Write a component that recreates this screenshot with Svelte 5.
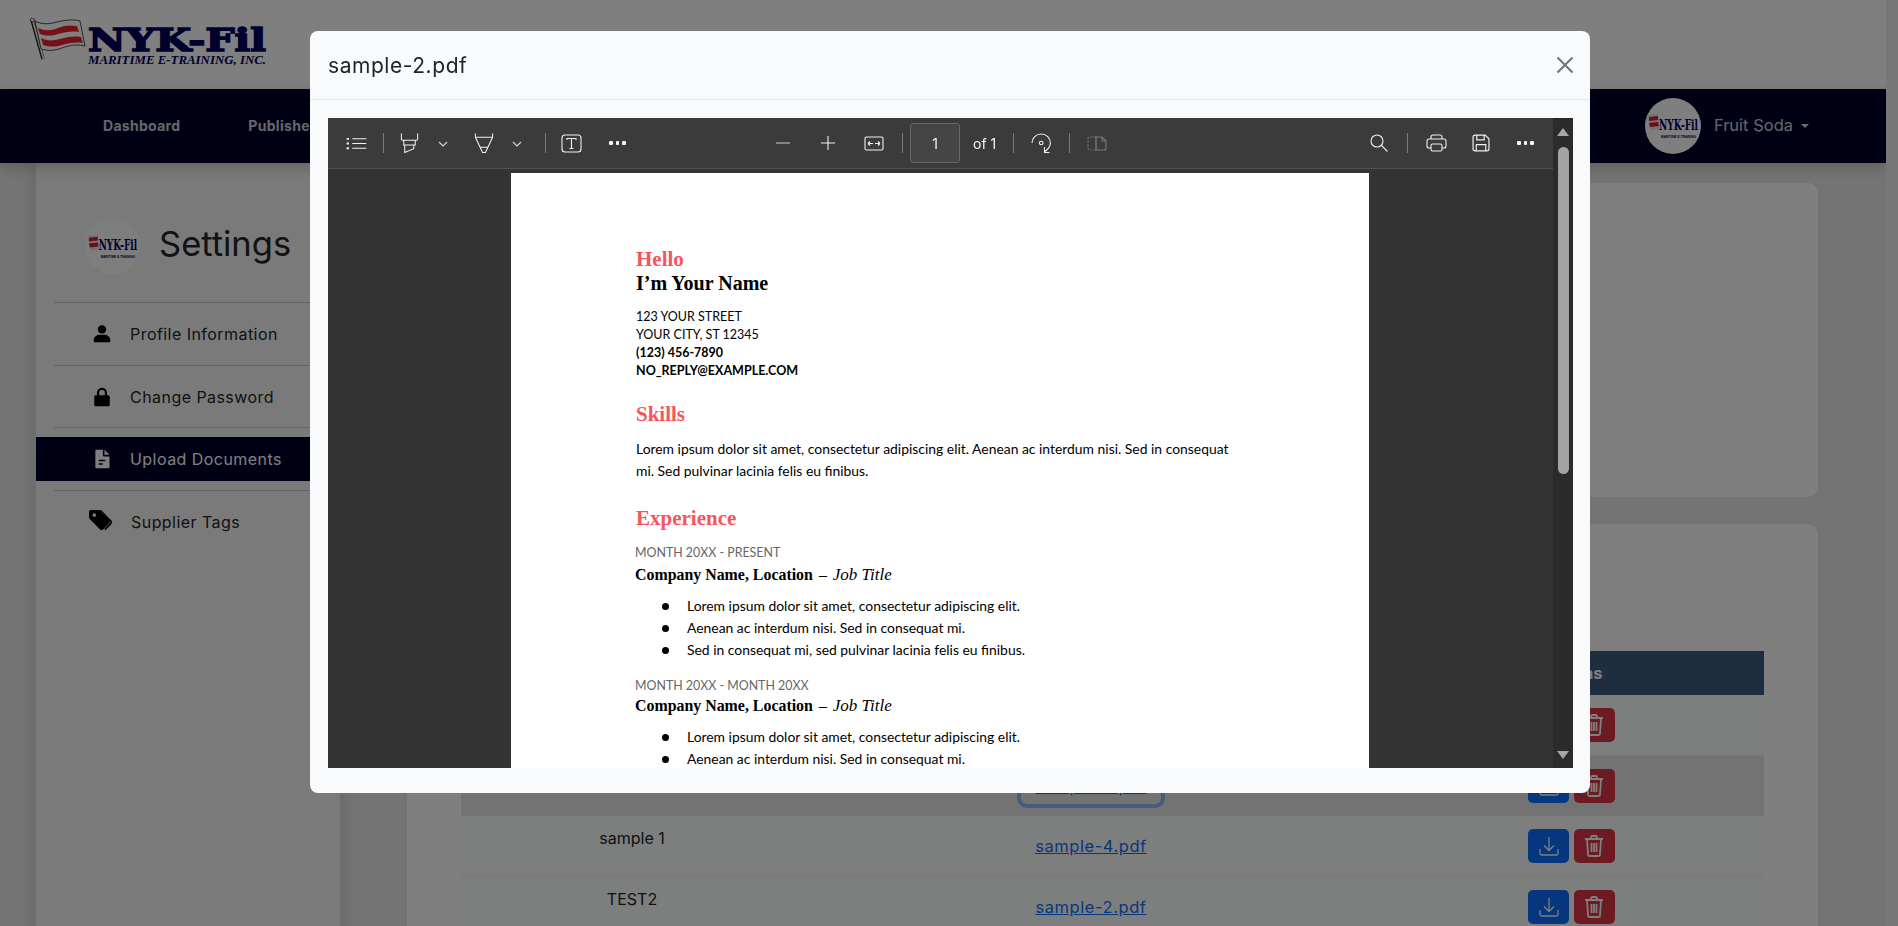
<script>
  const menu = [
    { label: 'Profile Information', icon: 'user' },
    { label: 'Change Password', icon: 'lock' },
    { label: 'Upload Documents', icon: 'file', active: true },
    { label: 'Supplier Tags', icon: 'tags' }
  ];
  const rows = [
    { name: '', file: 'sample-1.pdf' },
    { name: '', file: 'sample-3.pdf', striped: true, focused: true },
    { name: 'sample 1', file: 'sample-4.pdf' },
    { name: 'TEST2', file: 'sample-2.pdf' }
  ];
  const bullets = [
    'Lorem ipsum dolor sit amet, consectetur adipiscing elit.',
    'Aenean ac interdum nisi. Sed in consequat mi.',
    'Sed in consequat mi, sed pulvinar lacinia felis eu finibus.'
  ];
</script>

{#snippet miniLogo()}
  <svg class="mini" viewBox="0 0 56 56" aria-hidden="true">
    <path d="M3 17l10-1 1 15-9 1z" fill="#e4e4e4" />
    <path d="M4 19l9-1v4l-9 1zM4 25l9-1 1 4-9 1z" fill="#d0202c" />
    <text x="14" y="32" class="mini-name" textLength="39" lengthAdjust="spacingAndGlyphs">NYK-Fil</text>
    <text x="16" y="40" class="mini-sub" textLength="35" lengthAdjust="spacingAndGlyphs">MARITIME E-TRAINING</text>
  </svg>
{/snippet}

<div class="page">
  <header class="topbar">
    <svg class="logo" viewBox="0 0 240 50" aria-hidden="true">
      <path d="M2 2l11 39" stroke="#222" stroke-width="3.4" fill="none" />
      <path d="M2.600 2.400l11 39" stroke="#fff" stroke-width="1.600" fill="none" />
      <circle cx="2.400" cy="2" r="2" fill="#fff" stroke="#222" stroke-width=".8" />
      <path d="M5 3c8 4 14 3 22 1s17-3 23-1l5 25c-8-2-15-1-23 2s-14 3-21 1z" fill="#fff" stroke="#222" stroke-width=".8" />
      <path d="M8 10c7 3 13 3 20 0s13-3 19-2l2 6c-7-1-14 0-21 2s-12 2-18 0z" fill="#e8202c" />
      <path d="M11 20c6 3 12 3 19 1s14-3 21-2l2 6c-7-1-14 0-21 2s-13 2-19 0z" fill="#e8202c" />
      <text x="58" y="33" class="logo-name" textLength="178" lengthAdjust="spacingAndGlyphs">NYK-Fil</text>
      <text x="58" y="46" class="logo-sub" textLength="178" lengthAdjust="spacingAndGlyphs">MARITIME E-TRAINING, INC.</text>
    </svg>
  </header>

  <nav class="navbar">
    <div class="nav-links">
      <span>Dashboard</span>
      <span>Published</span>
    </div>
    <div class="nav-user">
      <span class="nav-avatar">{@render miniLogo()}</span>
      <span class="nav-name">Fruit Soda</span>
      <span class="caret"></span>
    </div>
  </nav>

  <div class="content">
    <aside class="sidebar">
      <div class="side-head">
        <span class="side-avatar">{@render miniLogo()}</span>
        <h1>Settings</h1>
      </div>
      <ul class="side-menu">
        {#each menu as item}
          <li class:active={item.active}>
            <span class="side-row">
              <svg class="side-icon" class:wide={item.icon === 'tags'} viewBox="0 0 24 24" aria-hidden="true">
                {#if item.icon === 'user'}
                  <circle cx="12" cy="6.500" r="5" />
                  <path d="M3.500 22c-1.200 0-1.500-.8-1.500-1.800C2 16 5 13 9 13h6c4 0 7 3 7 7.200 0 1-.3 1.800-1.500 1.800z" />
                {:else if item.icon === 'lock'}
                  <path d="M6 10V7a6 6 0 0 1 12 0v3h1.500a1.800 1.800 0 0 1 1.800 1.800v9.400a1.800 1.800 0 0 1-1.800 1.800h-15a1.800 1.800 0 0 1-1.800-1.800v-9.400A1.800 1.800 0 0 1 4.500 10zm2.600 0h6.800V7a3.400 3.400 0 0 0-6.800 0z" fill-rule="evenodd" />
                {:else if item.icon === 'file'}
                  <path d="M5 1h8v6.500a1.500 1.500 0 0 0 1.500 1.500H21v12.500a1.500 1.500 0 0 1-1.500 1.500h-14A1.500 1.500 0 0 1 4 21.500v-19A1.500 1.500 0 0 1 5 1zm10 0l6 6h-6zM8 13v1.800h8V13zm0 4v1.800h5V17z" fill-rule="evenodd" />
                {:else}
                  <path d="M1 3.500A1.500 1.500 0 0 1 2.500 2h7.200c.6 0 1.100.2 1.500.6l9.200 9.200a2 2 0 0 1 0 2.800l-6 6a2 2 0 0 1-2.800 0l-9.200-9.200A3 3 0 0 1 1 9.200zM6 5a1.800 1.800 0 1 0 0 3.600A1.800 1.800 0 0 0 6 5z" fill-rule="evenodd" />
                  <path d="M12.500 2l9.700 9.700a3 3 0 0 1 0 4.200l-5.500 5.500-1.200-1.200 5.500-5.500a1.400 1.400 0 0 0 0-2L10.500 2z" />
                {/if}
              </svg>
              {item.label}
            </span>
          </li>
        {/each}
      </ul>
    </aside>

    <main class="main">
      <section class="card card-top"></section>
      <section class="card card-table">
        <table>
          <thead>
            <tr><th class="col-name">Document Name</th><th class="col-file">File</th><th>Actions</th></tr>
          </thead>
          <tbody>
            {#each rows as row}
              <tr class:striped={row.striped}>
                <td class="name">{row.name}</td>
                <td class="file"><span class="file-link" class:focused={row.focused}>{row.file}</span></td>
                <td class="actions">
                  <span class="btn btn-blue">
                    <svg viewBox="0 0 24 24" aria-hidden="true"><path d="M12 3v13M7 11.500l5 5 5-5M3 15v4.500A1.500 1.500 0 0 0 4.500 21h15a1.500 1.500 0 0 0 1.500-1.500V15" /></svg>
                  </span>
                  <span class="btn btn-red">
                    <svg viewBox="0 0 24 24" aria-hidden="true"><path d="M3 5h18M9 5V3.500A1.500 1.500 0 0 1 10.500 2h3A1.500 1.500 0 0 1 15 3.500V5M5 5l1 15.500A1.500 1.500 0 0 0 7.500 22h9a1.500 1.500 0 0 0 1.500-1.500L19 5M9.500 9v9M12 9v9M14.500 9v9" /></svg>
                  </span>
                </td>
              </tr>
            {/each}
          </tbody>
        </table>
      </section>
    </main>
    <div class="scroll-strip"></div>
  </div>
</div>

<div class="overlay"></div>

<div class="modal">
  <div class="modal-head">
    <span class="modal-title">sample-2.pdf</span>
    <svg class="modal-close" viewBox="0 0 18 18" aria-hidden="true"><path d="M1.500 1.500l15 15M16.500 1.500l-15 15" /></svg>
  </div>
  <div class="modal-body">
    <div class="viewer">
      <div class="viewer-main">
        <div class="toolbar">
          <div class="tool-group left">
            <svg class="tool w22" viewBox="0 0 22 16"><path d="M7 3h15M7 8h15M7 13h15" /><path class="dot" d="M1 2h2.500v2H1zM1 7h2.500v2H1zM1 12h2.500v2H1z" /></svg>
            <i class="sep"></i>
            <svg class="tool w20" viewBox="0 0 20 22"><path d="M1 .5v6c0 .6.400 1 1 1h15c.6 0 1-.4 1-1v-6M3.500 7.500v5h12v-5M4.500 12.500v8l9.500-4v-4" /></svg>
            <svg class="chev" viewBox="0 0 10 6"><path d="M1 1l4 4 4-4" /></svg>
            <svg class="tool w20 pen" viewBox="0 0 20 22"><path d="M1 .5v4l7.500 16h3L19 4.500v-4M1 4.500h18M6 15h8" /></svg>
            <svg class="chev" viewBox="0 0 10 6"><path d="M1 1l4 4 4-4" /></svg>
            <i class="sep sep-b"></i>
            <svg class="tool tbox" viewBox="0 0 21 19"><rect x="1" y="1" width="19" height="17" rx="3" /><path d="M6 6V4.500h9V6M10.500 4.500V14.500M8.500 14.500h4" /></svg>
            <span class="dots"><b></b><b></b><b></b></span>
          </div>

          <div class="tool-group center">
            <svg class="tool w14 dim" viewBox="0 0 14 14"><path d="M0 7h14" /></svg>
            <svg class="tool w14 plus" viewBox="0 0 14 14"><path d="M0 7h14M7 0v14" /></svg>
            <svg class="tool w20 fit" viewBox="0 0 20 15"><rect x="1" y="1" width="18" height="13" rx="1.500" /><path d="M4 7.500h5M4 7.500l2-2M4 7.500l2 2M11 7.500h5M16 7.500l-2-2M16 7.500l-2 2" /></svg>
            <i class="sep sep-c"></i>
            <span class="page-input">1</span>
            <span class="page-of">of 1</span>
            <i class="sep sep-d"></i>
            <svg class="tool w20 rot" viewBox="0 0 20 20"><path d="M1 9.500a9.200 9 0 0 1 18.400 0c0 3.500-2 6-5.400 8.500" /><path d="M13.500 13.500v5.500h5" /><circle cx="10.200" cy="9.500" r="1.800" /></svg>
            <i class="sep sep-e"></i>
            <svg class="tool w20 off" viewBox="0 0 20 15"><path d="M9 1H3a2 2 0 0 0-2 2v9a2 2 0 0 0 2 2h6z" stroke-dasharray="2 1.500" /><path d="M9 1h6l4 4v7a2 2 0 0 1-2 2H9zM15 1v4h4" /></svg>
          </div>

          <div class="tool-group right">
            <svg class="tool w18" viewBox="0 0 18 18"><circle cx="7" cy="7" r="6" /><path d="M11.500 11.500L17.500 17.500" /></svg>
            <i class="sep sep-f"></i>
            <svg class="tool w21 print" viewBox="0 0 21 18"><path d="M5 5V3a2 2 0 0 1 2-2h7a2 2 0 0 1 2 2v2M5 14H3a2 2 0 0 1-2-2V7a2 2 0 0 1 2-2h15a2 2 0 0 1 2 2v5a2 2 0 0 1-2 2h-2" /><rect x="5" y="10" width="11" height="7" rx="1.500" /></svg>
            <svg class="tool w17 save" viewBox="0 0 17 17"><path d="M1 3a2 2 0 0 1 2-2h9.500L16 4.500V14a2 2 0 0 1-2 2H3a2 2 0 0 1-2-2z" /><path d="M4.500 1v4.500h7V1M4 16v-6h9v6" /></svg>
            <span class="dots dots-r"><b></b><b></b><b></b></span>
          </div>
        </div>

        <div class="doc-area">
          <article class="sheet">
            <h2 class="accent first">Hello</h2>
            <h2 class="name-line">I’m Your Name</h2>
            <p class="addr">123 YOUR STREET</p>
            <p class="addr">YOUR CITY, ST 12345</p>
            <p class="addr bold">(123) 456-7890</p>
            <p class="addr bold">NO_REPLY@EXAMPLE.COM</p>
            <h2 class="accent skills">Skills</h2>
            <p class="copy">Lorem ipsum dolor sit amet, consectetur adipiscing elit. Aenean ac interdum nisi. Sed in consequat<br />mi. Sed pulvinar lacinia felis eu finibus.</p>
            <h2 class="accent exp">Experience</h2>
            <p class="date">MONTH 20XX - PRESENT</p>
            <p class="job"><b>Company Name, Location</b> <span class="dash">–</span> <em>Job Title</em></p>
            <ul>{#each bullets as b}<li>{b}</li>{/each}</ul>
            <p class="date second">MONTH 20XX - MONTH 20XX</p>
            <p class="job job-second"><b>Company Name, Location</b> <span class="dash">–</span> <em>Job Title</em></p>
            <ul>{#each bullets.slice(0, 2) as b}<li>{b}</li>{/each}</ul>
          </article>
        </div>
      </div>

      <div class="vscroll">
        <span class="tri up"></span>
        <span class="thumb"></span>
        <span class="tri down"></span>
      </div>
    </div>
  </div>
</div>

<style>
  :global(body) {
    margin: 0;
    background: #fff;
    overflow: hidden;
  }

  .page {
    height: 926px;
    overflow: hidden;
    font-family: Inter, "Liberation Sans", sans-serif;
    background: #e8e8e8;
  }

  .topbar {
    height: 89px;
    width: 1886px;
    background: #fff;
    box-sizing: border-box;
    padding: 18px 0 0 30px;
  }

  .logo {
    width: 240px;
    height: 50px;
    display: block;
  }

  .logo-name {
    font: 900 31px "DejaVu Serif", serif;
    fill: #00005c;
    stroke: #00005c;
    stroke-width: 1.500px;
  }

  .logo-sub {
    font: italic 700 12px "Liberation Serif", serif;
    fill: #00005c;
  }

  .navbar {
    height: 74px;
    width: 1886px;
    background: #000028;
    display: flex;
    align-items: center;
    justify-content: space-between;
    box-sizing: border-box;
    padding: 0 77px 0 103px;
    position: relative;
    box-shadow: 0 4px 14px rgba(0, 0, 0, 0.2);
  }

  .nav-links {
    display: flex;
    gap: 68px;
    font-size: 14px;
    letter-spacing: 0.3px;
    font-weight: 700;
    color: #fff;
    opacity: 0.8;
    margin-top: -2px;
  }

  .nav-user {
    display: flex;
    align-items: center;
  }

  .nav-avatar {
    width: 56px;
    height: 56px;
    border-radius: 50%;
    background: #fff;
    overflow: hidden;
    display: block;
  }

  .mini {
    width: 100%;
    height: 100%;
    display: block;
  }

  .mini-name {
    font: 900 15px "DejaVu Serif", serif;
    fill: #00005c;
  }

  .mini-sub {
    font: 700 4px "Liberation Sans", sans-serif;
    fill: #00005c;
  }

  .nav-name {
    margin: -2px 0 0 13px;
    font-size: 16.500px;
    color: #fff;
    opacity: 0.8;
  }

  .caret {
    margin-left: 8px;
    border: 4.500px solid transparent;
    border-top-color: #fff;
    border-bottom: 0;
    opacity: 0.85;
  }

  .content {
    display: flex;
    align-items: flex-start;
    height: 763px;
    box-sizing: border-box;
  }

  .sidebar {
    width: 304px;
    height: 800px;
    margin-left: 36px;
    background: #f5f5f5;
    box-shadow: 0 0 18px rgba(0, 0, 0, 0.14);
    box-sizing: border-box;
    padding: 55px 0 0 18px;
    flex: none;
  }

  .side-head {
    display: flex;
    align-items: center;
    height: 56px;
    padding-left: 31px;
  }

  .side-avatar {
    width: 55px;
    height: 55px;
    flex: none;
    border-radius: 50%;
    overflow: hidden;
    background: #fdfdfd;
    display: block;
  }

  .side-head h1 {
    margin: -5px 0 0 19px;
    font-size: 34.500px;
    font-weight: 400;
    color: #212529;
  }

  .side-menu {
    list-style: none;
    margin: 28px 0 0;
    padding: 0;
  }

  .side-menu li {
    border-top: 1px solid #c9c9c9;
    height: 62.670px;
    box-sizing: border-box;
    padding-top: 9px;
  }

  .side-row {
    display: flex;
    align-items: center;
    height: 44px;
    margin-left: -18px;
    padding-left: 57px;
    font-size: 16px;
    letter-spacing: 0.45px;
    color: #212529;
  }

  .side-icon {
    width: 20px;
    height: 20px;
    margin: 0 18px 0 -1px;
    fill: #000;
    flex: none;
  }

  .side-icon.wide {
    width: 25px;
    height: 25px;
    margin: -2px 18px 0 -5px;
  }

  li.active .side-row {
    background: #000028;
    color: #fff;
  }

  li.active .side-icon {
    fill: #fff;
  }

  .main {
    margin-left: 67px;
    width: 1411px;
    padding-top: 20px;
    flex: none;
  }

  .card {
    background: #fefefe;
    border-radius: 10px;
    box-shadow: 0 0 10px rgba(0, 0, 0, 0.02);
  }

  .card-top {
    height: 314px;
    margin-bottom: 27px;
  }

  .card-table {
    height: 500px;
    box-sizing: border-box;
    padding: 127px 54px 0;
  }

  table {
    width: 100%;
    border-collapse: collapse;
    table-layout: fixed;
  }

  th {
    height: 44px;
    background: #3d5a80;
    color: #fff;
    font-size: 16.500px;
    font-weight: 700;
    padding: 0;
  }

  .col-name {
    width: 342px;
  }

  .col-file {
    width: 576px;
  }

  td {
    height: 60.500px;
    padding: 0;
    text-align: center;
    font-size: 16px;
    color: #212529;
    background: #fbfcfd;
    border-bottom: 1px solid #eee;
    box-sizing: border-box;
  }

  tr.striped td {
    background: #e6e6e6;
    border-bottom: 0;
  }

  .name {
    padding-bottom: 16px;
  }

  .file-link {
    display: inline-block;
    color: #0d6efd;
    text-decoration: underline;
    font-size: 16.500px;
    letter-spacing: 0.55px;
  }

  .file-link.focused {
    box-shadow: 0 0 0 4px #8ab8ff;
    border-radius: 6px;
    padding: 8px 14px;
    vertical-align: middle;
  }

  .btn {
    display: inline-flex;
    align-items: center;
    justify-content: center;
    width: 41px;
    height: 34px;
    border-radius: 5px;
    vertical-align: middle;
  }

  .btn svg {
    width: 24px;
    height: 24px;
    fill: none;
    stroke: #fff;
    stroke-width: 1.300;
  }

  .btn-blue {
    background: #0d6efd;
  }

  .btn-red {
    background: #dc3545;
  }

  .btn-red svg {
    stroke-width: 1.800;
  }

  .scroll-strip {
    position: fixed;
    right: 0;
    top: 0;
    bottom: 0;
    width: 12px;
    background: #efefef;
  }

  .overlay {
    position: fixed;
    inset: 0;
    background: rgba(0, 0, 0, 0.5);
  }

  .modal {
    position: fixed;
    left: 310px;
    top: 31px;
    width: 1280px;
    height: 762px;
    background: #f9fafc;
    border-radius: 8px;
    display: flex;
    flex-direction: column;
    overflow: hidden;
  }

  .modal-head {
    height: 69px;
    box-sizing: border-box;
    border-bottom: 1px solid #e2e4e8;
    display: flex;
    align-items: center;
    justify-content: space-between;
    padding: 0 16px 0 18px;
    flex: none;
  }

  .modal-title {
    font: 400 21px Inter, "Liberation Sans", sans-serif;
    letter-spacing: 0.55px;
    color: #212529;
  }

  .modal-close {
    width: 18px;
    height: 18px;
    fill: none;
    stroke: #6c757d;
    stroke-width: 2;
  }

  .modal-body {
    padding: 18px 17px 25px 18px;
    flex: 1;
    min-height: 0;
    display: flex;
  }

  .viewer {
    flex: 1;
    display: flex;
    background: #333;
    overflow: hidden;
    min-width: 0;
  }

  .viewer-main {
    flex: 1;
    min-width: 0;
    display: flex;
    flex-direction: column;
  }

  .toolbar {
    height: 51px;
    box-sizing: border-box;
    flex: none;
    background: #3b3b3b;
    border-bottom: 1px solid #515151;
    display: flex;
    align-items: center;
    color: #fff;
  }

  .tool-group {
    display: flex;
    align-items: center;
  }

  .left {
    padding-left: 17px;
    width: 425px;
    box-sizing: border-box;
    flex: none;
  }

  .center {
    flex: none;
    width: 617px;
    padding-left: 23px;
    box-sizing: border-box;
  }

  .right {
    flex: none;
  }

  .tool {
    fill: none;
    stroke: #f1f1f1;
    stroke-width: 1.100;
    flex: none;
    display: block;
  }

  .tool .dot {
    fill: #f1f1f1;
    stroke: none;
  }

  .w14 { width: 14px; height: 14px; }
  .w17 { width: 18px; height: 18px; }
  .w18 { width: 18px; height: 18px; }
  .w20 { width: 20px; height: 21px; }
  .w21 { width: 21px; height: 18px; }
  .w22 { width: 22px; height: 15px; }

  .dim {
    stroke: #cfcfcf;
  }

  .plus {
    margin-left: 31px;
  }

  .fit {
    height: 15px;
    margin-left: 29px;
  }

  .tbox {
    width: 21px;
    height: 19px;
    margin-left: 15px;
  }

  .pen {
    margin-left: 26px;
  }

  .rot {
    margin-left: 17px;
  }

  .off {
    height: 15px;
    margin-left: 17px;
    stroke: #7a7a7a;
  }

  .print {
    margin-left: 18px;
  }

  .save {
    margin-left: 25px;
  }

  .sep {
    display: block;
    width: 1px;
    height: 20px;
    background: #7a7a7a;
    margin: 0 16px;
    flex: none;
  }

  .sep-b { margin: 0 0 0 23px; }
  .sep-c { margin: 0 7px 0 18px; }
  .sep-d { margin: 0 0 0 16px; }
  .sep-e { margin: 0 0 0 18px; }
  .sep-f { margin: 0 0 0 19px; }

  .chev {
    width: 10px;
    height: 6px;
    margin: 2px 0 0 18px;
    fill: none;
    stroke: #d5d5d5;
    stroke-width: 1.100;
    flex: none;
  }

  .dots {
    display: flex;
    gap: 3px;
    margin-left: 27px;
    flex: none;
  }

  .dots b {
    width: 3.500px;
    height: 3.500px;
    background: #f4f4f4;
    border-radius: 1px;
  }

  .dots-r {
    margin-left: 27px;
  }

  .page-input {
    width: 50px;
    height: 40px;
    box-sizing: border-box;
    border: 1px solid #666;
    border-radius: 3px;
    background: #454545;
    font: 400 14px Inter, "Liberation Sans", sans-serif;
    color: #f3f3f3;
    display: flex;
    align-items: center;
    justify-content: center;
    flex: none;
  }

  .page-of {
    font: 400 14px Inter, "Liberation Sans", sans-serif;
    color: #f3f3f3;
    margin-left: 13px;
    width: 24px;
    white-space: nowrap;
  }

  .doc-area {
    flex: 1;
    min-height: 0;
    overflow: hidden;
    padding: 4px 0 0 183px;
  }

  .sheet {
    width: 858px;
    min-height: 900px;
    background: #fff;
    box-sizing: border-box;
    padding: 74px 0 0 125px;
    color: #000;
    font-family: Lato, "Liberation Sans", sans-serif;
  }

  .sheet h2 {
    margin: 0;
    font: 700 21px/24px "Liberation Serif", serif;
  }

  .accent {
    color: #f7555c;
  }

  .sheet .name-line {
    color: #000;
    font-size: 20px;
    margin-bottom: 13px;
  }

  .addr {
    margin: 0;
    font-size: 12.500px;
    line-height: 18px;
  }

  .bold {
    font-weight: 700;
  }

  .sheet .skills {
    margin-top: 22px;
  }

  .copy {
    margin: 12px 0 0;
    font-size: 13.900px;
    line-height: 22px;
  }

  .sheet .exp {
    margin-top: 24px;
  }

  .date {
    margin: 14px 0 0 -1px;
    font-size: 12.400px;
    line-height: 18px;
    color: #666;
  }

  .date.second {
    margin-top: 16px;
  }

  .job {
    margin: 1px 0 0 -1px;
    font: 400 15.900px/24px "Liberation Serif", serif;
  }

  .job-second {
    margin-top: -1px;
  }

  .dash {
    margin: 0 2px;
  }

  .job em {
    font-style: italic;
    font-size: 17px;
  }

  .sheet ul {
    list-style: none;
    margin: 8px 0 0;
    padding: 0 0 0 26px;
  }

  .sheet li {
    display: flex;
    align-items: center;
    font-size: 13.900px;
    line-height: 22px;
  }

  .sheet li::before {
    content: "";
    width: 7px;
    height: 7px;
    margin-right: 18px;
    border-radius: 50%;
    background: #000;
    flex: none;
  }

  .vscroll {
    width: 20px;
    flex: none;
    background: #2b2b2b;
    display: flex;
    flex-direction: column;
    align-items: center;
  }

  .tri {
    width: 0;
    height: 0;
    border-left: 6.500px solid transparent;
    border-right: 6.500px solid transparent;
    flex: none;
  }

  .tri.up {
    margin-top: 10px;
    border-bottom: 8px solid #a6a6a6;
  }

  .tri.down {
    margin-top: auto;
    margin-bottom: 9px;
    border-top: 8px solid #a6a6a6;
  }

  .thumb {
    width: 11px;
    height: 327px;
    margin-top: 11px;
    border-radius: 6px;
    background: #a3a3a3;
    flex: none;
  }
</style>
